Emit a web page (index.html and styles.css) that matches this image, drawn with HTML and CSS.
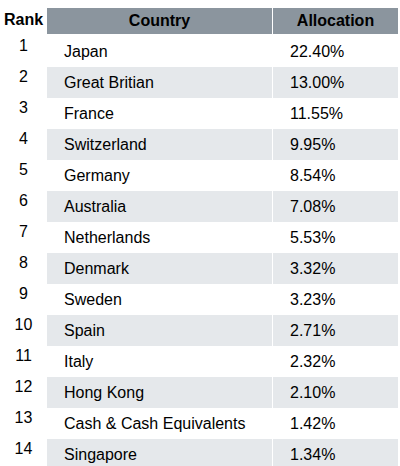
FILE: index.html
```html
<!DOCTYPE html>
<html lang="en">
<head>
    <meta charset="UTF-8">
    <meta name="viewport" content="width=device-width, initial-scale=1.0">
    <title>Country Allocation</title>
    <link rel="stylesheet" href="styles.css">
</head>
<body>

    <!-- Allocation Table -->
    <table class="alloc-table">
        <thead>
            <tr>
                <th class="rank">Rank</th>
                <th class="country">Country</th>
                <th class="alloc">Allocation</th>
            </tr>
        </thead>
        <tbody>
            <tr><td class="rank">1</td><td class="country">Japan</td><td class="alloc">22.40%</td></tr>
            <tr><td class="rank">2</td><td class="country">Great Britian</td><td class="alloc">13.00%</td></tr>
            <tr><td class="rank">3</td><td class="country">France</td><td class="alloc">11.55%</td></tr>
            <tr><td class="rank">4</td><td class="country">Switzerland</td><td class="alloc">9.95%</td></tr>
            <tr><td class="rank">5</td><td class="country">Germany</td><td class="alloc">8.54%</td></tr>
            <tr><td class="rank">6</td><td class="country">Australia</td><td class="alloc">7.08%</td></tr>
            <tr><td class="rank">7</td><td class="country">Netherlands</td><td class="alloc">5.53%</td></tr>
            <tr><td class="rank">8</td><td class="country">Denmark</td><td class="alloc">3.32%</td></tr>
            <tr><td class="rank">9</td><td class="country">Sweden</td><td class="alloc">3.23%</td></tr>
            <tr><td class="rank">10</td><td class="country">Spain</td><td class="alloc">2.71%</td></tr>
            <tr><td class="rank">11</td><td class="country">Italy</td><td class="alloc">2.32%</td></tr>
            <tr><td class="rank">12</td><td class="country">Hong Kong</td><td class="alloc">2.10%</td></tr>
            <tr><td class="rank">13</td><td class="country">Cash &amp; Cash Equivalents</td><td class="alloc">1.42%</td></tr>
            <tr><td class="rank">14</td><td class="country">Singapore</td><td class="alloc">1.34%</td></tr>
        </tbody>
    </table>

</body>
</html>
```

FILE: styles.css
```css
/* Reset default styles */
* {
    margin: 0;
    padding: 0;
    box-sizing: border-box;
}

body {
    font-family: "Liberation Sans", Arial, sans-serif;
    font-size: 16px;
    color: #000;
    background-color: #fff;
    padding-top: 8px;
}

/* Table */
.alloc-table {
    border-collapse: separate;
    border-spacing: 0;
    table-layout: fixed;
    width: 398px;
}

.alloc-table th {
    height: 28px;
    font-weight: bold;
    text-align: center;
    background-color: #8b959e;
    border-bottom: 2px solid #fff;
    padding-bottom: 1px;
}

.alloc-table th.rank {
    background-color: #fff;
    vertical-align: top;
    padding-top: 3px;
}

.alloc-table td {
    height: 31px;
    line-height: 18px;
    vertical-align: middle;
}

.rank {
    width: 47px;
    text-align: center;
}

.alloc-table td.rank {
    vertical-align: top;
    padding-top: 1px;
}

.country {
    width: 226px;
    padding-left: 17px;
    border-right: 1px solid #fff;
}

.alloc {
    width: 125px;
    padding-left: 17px;
}

.alloc-table th.country,
.alloc-table th.alloc {
    padding-left: 0;
}

/* Alternating rows */
.alloc-table tbody tr:nth-child(even) .country,
.alloc-table tbody tr:nth-child(even) .alloc {
    background-color: #e5e8eb;
}
```
